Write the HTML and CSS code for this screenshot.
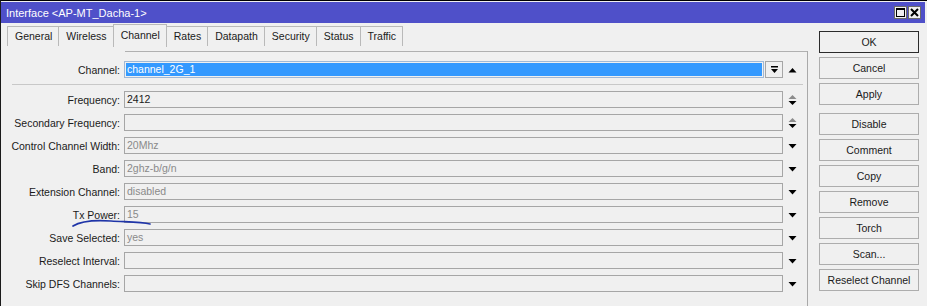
FILE: index.html
```html
<!DOCTYPE html>
<html lang="en">

<head>
  <meta charset="UTF-8">
  <title>Interface &lt;AP-MT_Dacha-1&gt;</title>
  <link rel="stylesheet" href="styles.css">
</head>

<body>
  <div class="window">
    <div class="titlebar">
      <span class="title">Interface &lt;AP-MT_Dacha-1&gt;</span>
      <div class="win-btns">
        <span class="win-btn">
          <svg width="11" height="11" viewBox="0 0 11 11">
            <rect x="1.5" y="1.5" width="8" height="8" fill="none" stroke="#000" />
            <rect x="1" y="1" width="9" height="2" fill="#000" />
          </svg>
        </span>
        <span class="win-btn">
          <svg width="11" height="11" viewBox="0 0 11 11">
            <path d="M2 2 L9 9 M9 2 L2 9" stroke="#000" stroke-width="2" />
          </svg>
        </span>
      </div>
    </div>

    <div class="main">
      <div class="panel">
        <div class="tabs">
          <span class="tab">General</span>
          <span class="tab">Wireless</span>
          <span class="tab active">Channel</span>
          <span class="tab">Rates</span>
          <span class="tab">Datapath</span>
          <span class="tab">Security</span>
          <span class="tab">Status</span>
          <span class="tab">Traffic</span>
        </div>

        <div class="frame">
          <div class="frame-top"></div>
          <div class="form">
            <div class="row">
              <label class="label">Channel:</label>
              <div class="field selected"><span class="sel-text">channel_2G_1</span></div>
              <span class="dd-btn">
                <svg width="9" height="9" viewBox="0 0 9 9">
                  <rect x="1" y="1" width="7" height="1.5" fill="#000" />
                  <path d="M1 4 L8 4 L4.5 8 Z" fill="#000" />
                </svg>
              </span>
              <span class="arrow">
                <svg width="9" height="6" viewBox="0 0 9 6"><path d="M0.5 5.5 L8.5 5.5 L4.5 1 Z" fill="#000" /></svg>
              </span>
            </div>

            <div class="separator"></div>

            <div class="row">
              <label class="label">Frequency:</label>
              <div class="field">2412</div>
              <span class="arrow">
                <svg width="9" height="12" viewBox="0 0 9 12">
                  <path d="M0.5 5 L8.5 5 L4.5 1 Z" fill="#8c8c8c" />
                  <path d="M0.5 7 L8.5 7 L4.5 11 Z" fill="#000" />
                </svg>
              </span>
            </div>
            <div class="row">
              <label class="label">Secondary Frequency:</label>
              <div class="field"></div>
              <span class="arrow">
                <svg width="9" height="12" viewBox="0 0 9 12">
                  <path d="M0.5 5 L8.5 5 L4.5 1 Z" fill="#8c8c8c" />
                  <path d="M0.5 7 L8.5 7 L4.5 11 Z" fill="#000" />
                </svg>
              </span>
            </div>
            <div class="row">
              <label class="label">Control Channel Width:</label>
              <div class="field muted">20Mhz</div>
              <span class="arrow"><svg width="9" height="6" viewBox="0 0 9 6"><path d="M0.5 1 L8.5 1 L4.5 5.5 Z" fill="#000" /></svg></span>
            </div>
            <div class="row">
              <label class="label">Band:</label>
              <div class="field muted">2ghz-b/g/n</div>
              <span class="arrow"><svg width="9" height="6" viewBox="0 0 9 6"><path d="M0.5 1 L8.5 1 L4.5 5.5 Z" fill="#000" /></svg></span>
            </div>
            <div class="row">
              <label class="label">Extension Channel:</label>
              <div class="field muted">disabled</div>
              <span class="arrow"><svg width="9" height="6" viewBox="0 0 9 6"><path d="M0.5 1 L8.5 1 L4.5 5.5 Z" fill="#000" /></svg></span>
            </div>
            <div class="row">
              <label class="label">Tx Power:</label>
              <div class="field muted">15</div>
              <span class="arrow"><svg width="9" height="6" viewBox="0 0 9 6"><path d="M0.5 1 L8.5 1 L4.5 5.5 Z" fill="#000" /></svg></span>
            </div>
            <div class="row">
              <label class="label">Save Selected:</label>
              <div class="field muted">yes</div>
              <span class="arrow"><svg width="9" height="6" viewBox="0 0 9 6"><path d="M0.5 1 L8.5 1 L4.5 5.5 Z" fill="#000" /></svg></span>
            </div>
            <div class="row">
              <label class="label">Reselect Interval:</label>
              <div class="field"></div>
              <span class="arrow"><svg width="9" height="6" viewBox="0 0 9 6"><path d="M0.5 1 L8.5 1 L4.5 5.5 Z" fill="#000" /></svg></span>
            </div>
            <div class="row">
              <label class="label">Skip DFS Channels:</label>
              <div class="field"></div>
              <span class="arrow"><svg width="9" height="6" viewBox="0 0 9 6"><path d="M0.5 1 L8.5 1 L4.5 5.5 Z" fill="#000" /></svg></span>
            </div>
          </div>
        </div>
      </div>

      <div class="actions">
        <button class="btn default">OK</button>
        <button class="btn">Cancel</button>
        <button class="btn group-end">Apply</button>
        <button class="btn">Disable</button>
        <button class="btn">Comment</button>
        <button class="btn">Copy</button>
        <button class="btn">Remove</button>
        <button class="btn">Torch</button>
        <button class="btn">Scan...</button>
        <button class="btn">Reselect Channel</button>
      </div>
    </div>

    <!-- hand drawn mark under Tx Power -->
    <svg class="scribble" width="100" height="14" viewBox="0 0 100 14">
      <path d="M2 9 C 10 4, 25 3, 40 4 S 70 5, 79 7" fill="none" stroke="#1f35a8" stroke-width="1.7"
        stroke-linecap="round" />
    </svg>
  </div>
</body>

</html>
```

FILE: styles.css
```css
* {
  box-sizing: border-box;
}

body {
  margin: 0;
  background-color: #f0f0f0;
  font-family: "Liberation Sans", Arial, sans-serif;
  font-size: 10.5px;
  color: #1a1a1a;
}

.window {
  position: relative;
  width: 927px;
  height: 306px;
  border-top: 1px solid #000;
  border-left: 1px solid #1a1a1a;
  overflow: hidden;
}

.titlebar {
  display: flex;
  align-items: center;
  justify-content: space-between;
  height: 21px;
  margin: 1px 1px 0 0;
  width: 924px;
  background-color: #4f50c9;
  padding: 0 4px 0 5px;
}

.title {
  color: white;
  font-size: 11px;
}

.win-btns {
  display: flex;
  gap: 1px;
}

.win-btn {
  display: flex;
  align-items: center;
  justify-content: center;
  width: 13px;
  height: 13px;
  background-color: #f0f0f0;
  border: 1px solid #6a6a6a;
}

.main {
  display: flex;
  flex-direction: row;
}

.panel {
  width: 807px;
  display: flex;
  flex-direction: column;
}

/* tab strip */
.tabs {
  display: flex;
  align-items: flex-start;
  height: 24px;
  padding: 1px 0 0 6px;
}

.tab {
  height: 20px;
  margin-top: 2px;
  margin-right: -1px;
  padding: 0 6px 0 7px;
  line-height: 19px;
  border: 1px solid #b9b9b9;
  border-bottom: none;
  background-color: #f0f0f0;
}

.tab.active {
  position: relative;
  z-index: 1;
  height: 23px;
  margin-top: 0;
  line-height: 21px;
}

.frame {
  margin-top: 4px;
  height: 256px;
  border-right: 1px solid #a9a9a9;
}

.frame-top {
  margin-left: 124px;
  border-top: 1px solid #b0b0b0;
}

.form {
  padding-top: 9px;
}

.row {
  display: flex;
  flex-direction: row;
  align-items: center;
  height: 17px;
  margin-bottom: 6px;
}

.label {
  width: 119px;
  text-align: right;
  white-space: nowrap;
}

.field {
  width: 659px;
  height: 17px;
  margin-left: 4px;
  padding-left: 2px;
  line-height: 15px;
  border: 1px solid #a6a6a6;
  background-color: #f0f0f0;
  white-space: nowrap;
}

.field.muted {
  color: #8a8a8a;
}

.field.selected {
  width: 640px;
  padding: 1px;
  border-color: #9fb8d6;
}

.sel-text {
  display: block;
  height: 13px;
  padding-left: 1px;
  line-height: 13px;
  color: white;
  background-color: #3399ff;
}

.dd-btn {
  display: flex;
  align-items: center;
  justify-content: center;
  width: 18px;
  height: 17px;
  margin-left: 1px;
  border: 1px solid #a6a6a6;
}

.arrow {
  display: flex;
  align-items: center;
  justify-content: center;
  width: 11px;
  margin-left: 4px;
}

.separator {
  margin: 5px 4px 6px 11px;
  border-top: 1px solid #c8c8c8;
}

/* button column */
.actions {
  display: flex;
  flex-direction: column;
  padding: 8px 0 0 11px;
}

.btn {
  width: 100px;
  height: 22px;
  margin-bottom: 4px;
  padding: 0;
  font-family: "Liberation Sans", Arial, sans-serif;
  font-size: 10.5px;
  color: #1a1a1a;
  background-color: #f0f0f0;
  border: 1px solid #adadad;
}

.btn.default {
  border-color: #2b2b2b;
}

.btn.group-end {
  margin-bottom: 8px;
}

.scribble {
  position: absolute;
  left: 70px;
  top: 216px;
}
```
